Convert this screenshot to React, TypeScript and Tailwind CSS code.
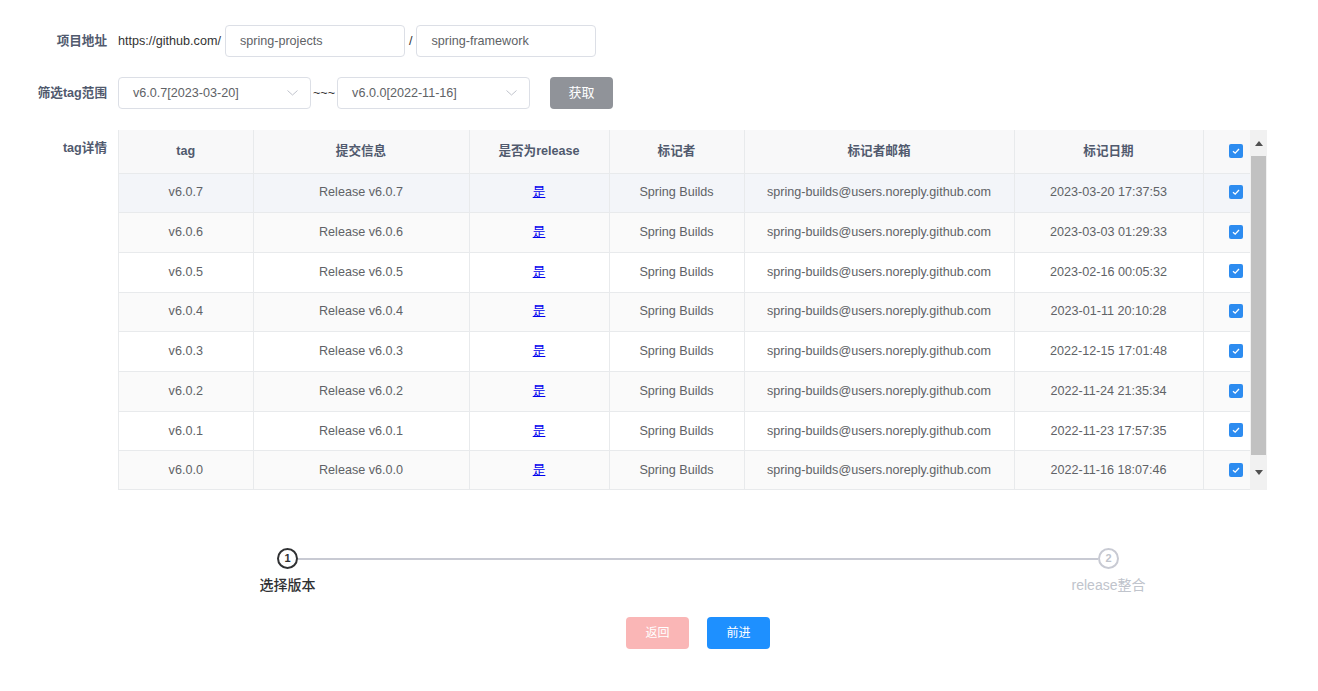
import React from "react";

const font = { fontFamily: '"Liberation Sans", "Noto Sans CJK SC", sans-serif' };

const tags = [
  { tag: "v6.0.7", date: "2023-03-20 17:37:53" },
  { tag: "v6.0.6", date: "2023-03-03 01:29:33" },
  { tag: "v6.0.5", date: "2023-02-16 00:05:32" },
  { tag: "v6.0.4", date: "2023-01-11 20:10:28" },
  { tag: "v6.0.3", date: "2022-12-15 17:01:48" },
  { tag: "v6.0.2", date: "2022-11-24 21:35:34" },
  { tag: "v6.0.1", date: "2022-11-23 17:57:35" },
  { tag: "v6.0.0", date: "2022-11-16 18:07:46" },
];

const Checkbox = () => (
  <span className="inline-flex h-[14px] w-[14px] items-center justify-center rounded-[2px] bg-[#2d8cf0] align-middle">
    <svg width="10" height="10" viewBox="0 0 10 10" fill="none">
      <path d="M2 5.2 4.2 7.2 8 3" stroke="white" strokeWidth="1.3" />
    </svg>
  </span>
);

const Chevron = () => (
  <svg width="11" height="6" viewBox="0 0 11 6" fill="none">
    <path d="M0.5 0.5 5.5 5 10.5 0.5" stroke="#c0c4cc" strokeWidth="1" />
  </svg>
);

const Select = ({ value }: { value: string }) => (
  <div className="flex h-[32px] w-[193px] items-center justify-between rounded-[4px] border border-[#dcdfe6] bg-white pl-[14px] pr-[12px] text-[12.6px] text-[#606266]">
    <span>{value}</span>
    <Chevron />
  </div>
);

const Input = ({ value }: { value: string }) => (
  <div className="flex h-[32px] w-[180px] items-center rounded-[4px] border border-[#dcdfe6] bg-white px-[14px] text-[12.6px] text-[#606266]">
    {value}
  </div>
);

const Scrollbar = () => (
  <div className="flex h-[360px] w-[17px] flex-col items-center bg-[#f1f1f1]">
    <div className="flex h-[26px] w-full items-center justify-center">
      <svg width="8" height="5" viewBox="0 0 8 5">
        <path d="M0 5 4 0 8 5Z" fill="#505050" />
      </svg>
    </div>
    <div className="h-[299px] w-[15px] bg-[#c1c1c1]" />
    <div className="flex flex-1 w-full items-center justify-center">
      <svg width="8" height="5" viewBox="0 0 8 5">
        <path d="M0 0 4 5 8 0Z" fill="#505050" />
      </svg>
    </div>
  </div>
);

export default function App() {
  return (
    <div className="min-h-screen bg-white pt-[25px]" style={font}>
      <div className="flex items-center">
        <div className="w-[107px] text-right text-[12.6px] font-bold text-[#515a6e]">项目地址</div>
        <div className="ml-[11px] flex items-center text-[12.6px] text-[#333]">
          <span className="mr-[4px]">https://github.com/</span>
          <Input value="spring-projects" />
          <span className="mx-[4px]">/</span>
          <Input value="spring-framework" />
        </div>
      </div>

      <div className="mt-[20px] flex items-center">
        <div className="w-[107px] text-right text-[12.6px] font-bold text-[#515a6e]">筛选tag范围</div>
        <div className="ml-[11px] flex items-center text-[12.6px] text-[#333]">
          <Select value="v6.0.7[2023-03-20]" />
          <span className="mx-[2px]">~~~</span>
          <Select value="v6.0.0[2022-11-16]" />
          <button className="ml-[20px] h-[32px] w-[63px] rounded-[4px] bg-[#909399] text-[13px] text-white">获取</button>
        </div>
      </div>

      <div className="mt-[21px] flex items-start">
        <div className="w-[107px] pt-[9px] text-right text-[12.6px] font-bold text-[#515a6e]">tag详情</div>
        <div className="ml-[11px] flex border-l border-[#e8eaec]">
          <div className="h-[360px] w-[1131px] overflow-hidden border-b border-[#e8eaec]">
            <table className="w-full table-fixed border-collapse text-[12.6px]">
              <colgroup>
                <col className="w-[134px]" />
                <col className="w-[216px]" />
                <col className="w-[140px]" />
                <col className="w-[135px]" />
                <col className="w-[270px]" />
                <col className="w-[189px]" />
                <col />
              </colgroup>
              <thead>
                <tr className="h-[43px] bg-[#f8f8f9] font-bold text-[#515a6e]">
                  <th className="border-b border-r border-[#e8eaec]">tag</th>
                  <th className="border-b border-r border-[#e8eaec]">提交信息</th>
                  <th className="border-b border-r border-[#e8eaec]">是否为release</th>
                  <th className="border-b border-r border-[#e8eaec]">标记者</th>
                  <th className="border-b border-r border-[#e8eaec]">标记者邮箱</th>
                  <th className="border-b border-r border-[#e8eaec]">标记日期</th>
                  <th className="border-b border-[#e8eaec] pl-[25px] text-left">
                    <Checkbox />
                  </th>
                </tr>
              </thead>
              <tbody className="text-center text-[#606266]">
                {tags.map((t, i) => (
                  <tr
                    key={t.tag}
                    className={`h-[39.7px] ${i === 0 ? "bg-[#f3f5f9]" : i % 2 === 1 ? "bg-[#fafafa]" : "bg-white"}`}
                  >
                    <td className="border-b border-r border-[#e8eaec]">{t.tag}</td>
                    <td className="border-b border-r border-[#e8eaec]">Release {t.tag}</td>
                    <td className="border-b border-r border-[#e8eaec]">
                      <a href="#" className="text-[#0000ee] underline">是</a>
                    </td>
                    <td className="border-b border-r border-[#e8eaec]">Spring Builds</td>
                    <td className="border-b border-r border-[#e8eaec]">spring-builds@users.noreply.github.com</td>
                    <td className="border-b border-r border-[#e8eaec]">{t.date}</td>
                    <td className="border-b border-[#e8eaec] pb-[2px] pl-[25px] text-left">
                      <Checkbox />
                    </td>
                  </tr>
                ))}
              </tbody>
            </table>
          </div>
          <Scrollbar />
        </div>
      </div>

      <div className="ml-[247px] mt-[58px] w-[902px]">
        <div className="flex items-center px-[30px]">
          <span className="flex h-[21px] w-[21px] items-center justify-center rounded-full border-2 border-[#303133] text-[11px] font-bold text-[#303133]">1</span>
          <div className="h-[2px] flex-1 bg-[#c8cad3]" />
          <span className="flex h-[21px] w-[21px] items-center justify-center rounded-full border-2 border-[#c8cad3] text-[11px] font-bold text-[#c0c4cc]">2</span>
        </div>
        <div className="mt-[6px] flex justify-between">
          <div className="w-[81px] text-center text-[14px] font-medium text-[#303133]">选择版本</div>
          <div className="w-[81px] text-center text-[14px] text-[#c0c4cc]">release整合</div>
        </div>
      </div>

      <div className="ml-[626px] mt-[21px] flex gap-[18px] pb-[40px]">
        <button className="h-[32px] w-[63px] rounded-[4px] bg-[#fab6b6] text-[12px] text-white">返回</button>
        <button className="h-[32px] w-[63px] rounded-[4px] bg-[#1e90ff] text-[12px] text-white">前进</button>
      </div>
    </div>
  );
}
